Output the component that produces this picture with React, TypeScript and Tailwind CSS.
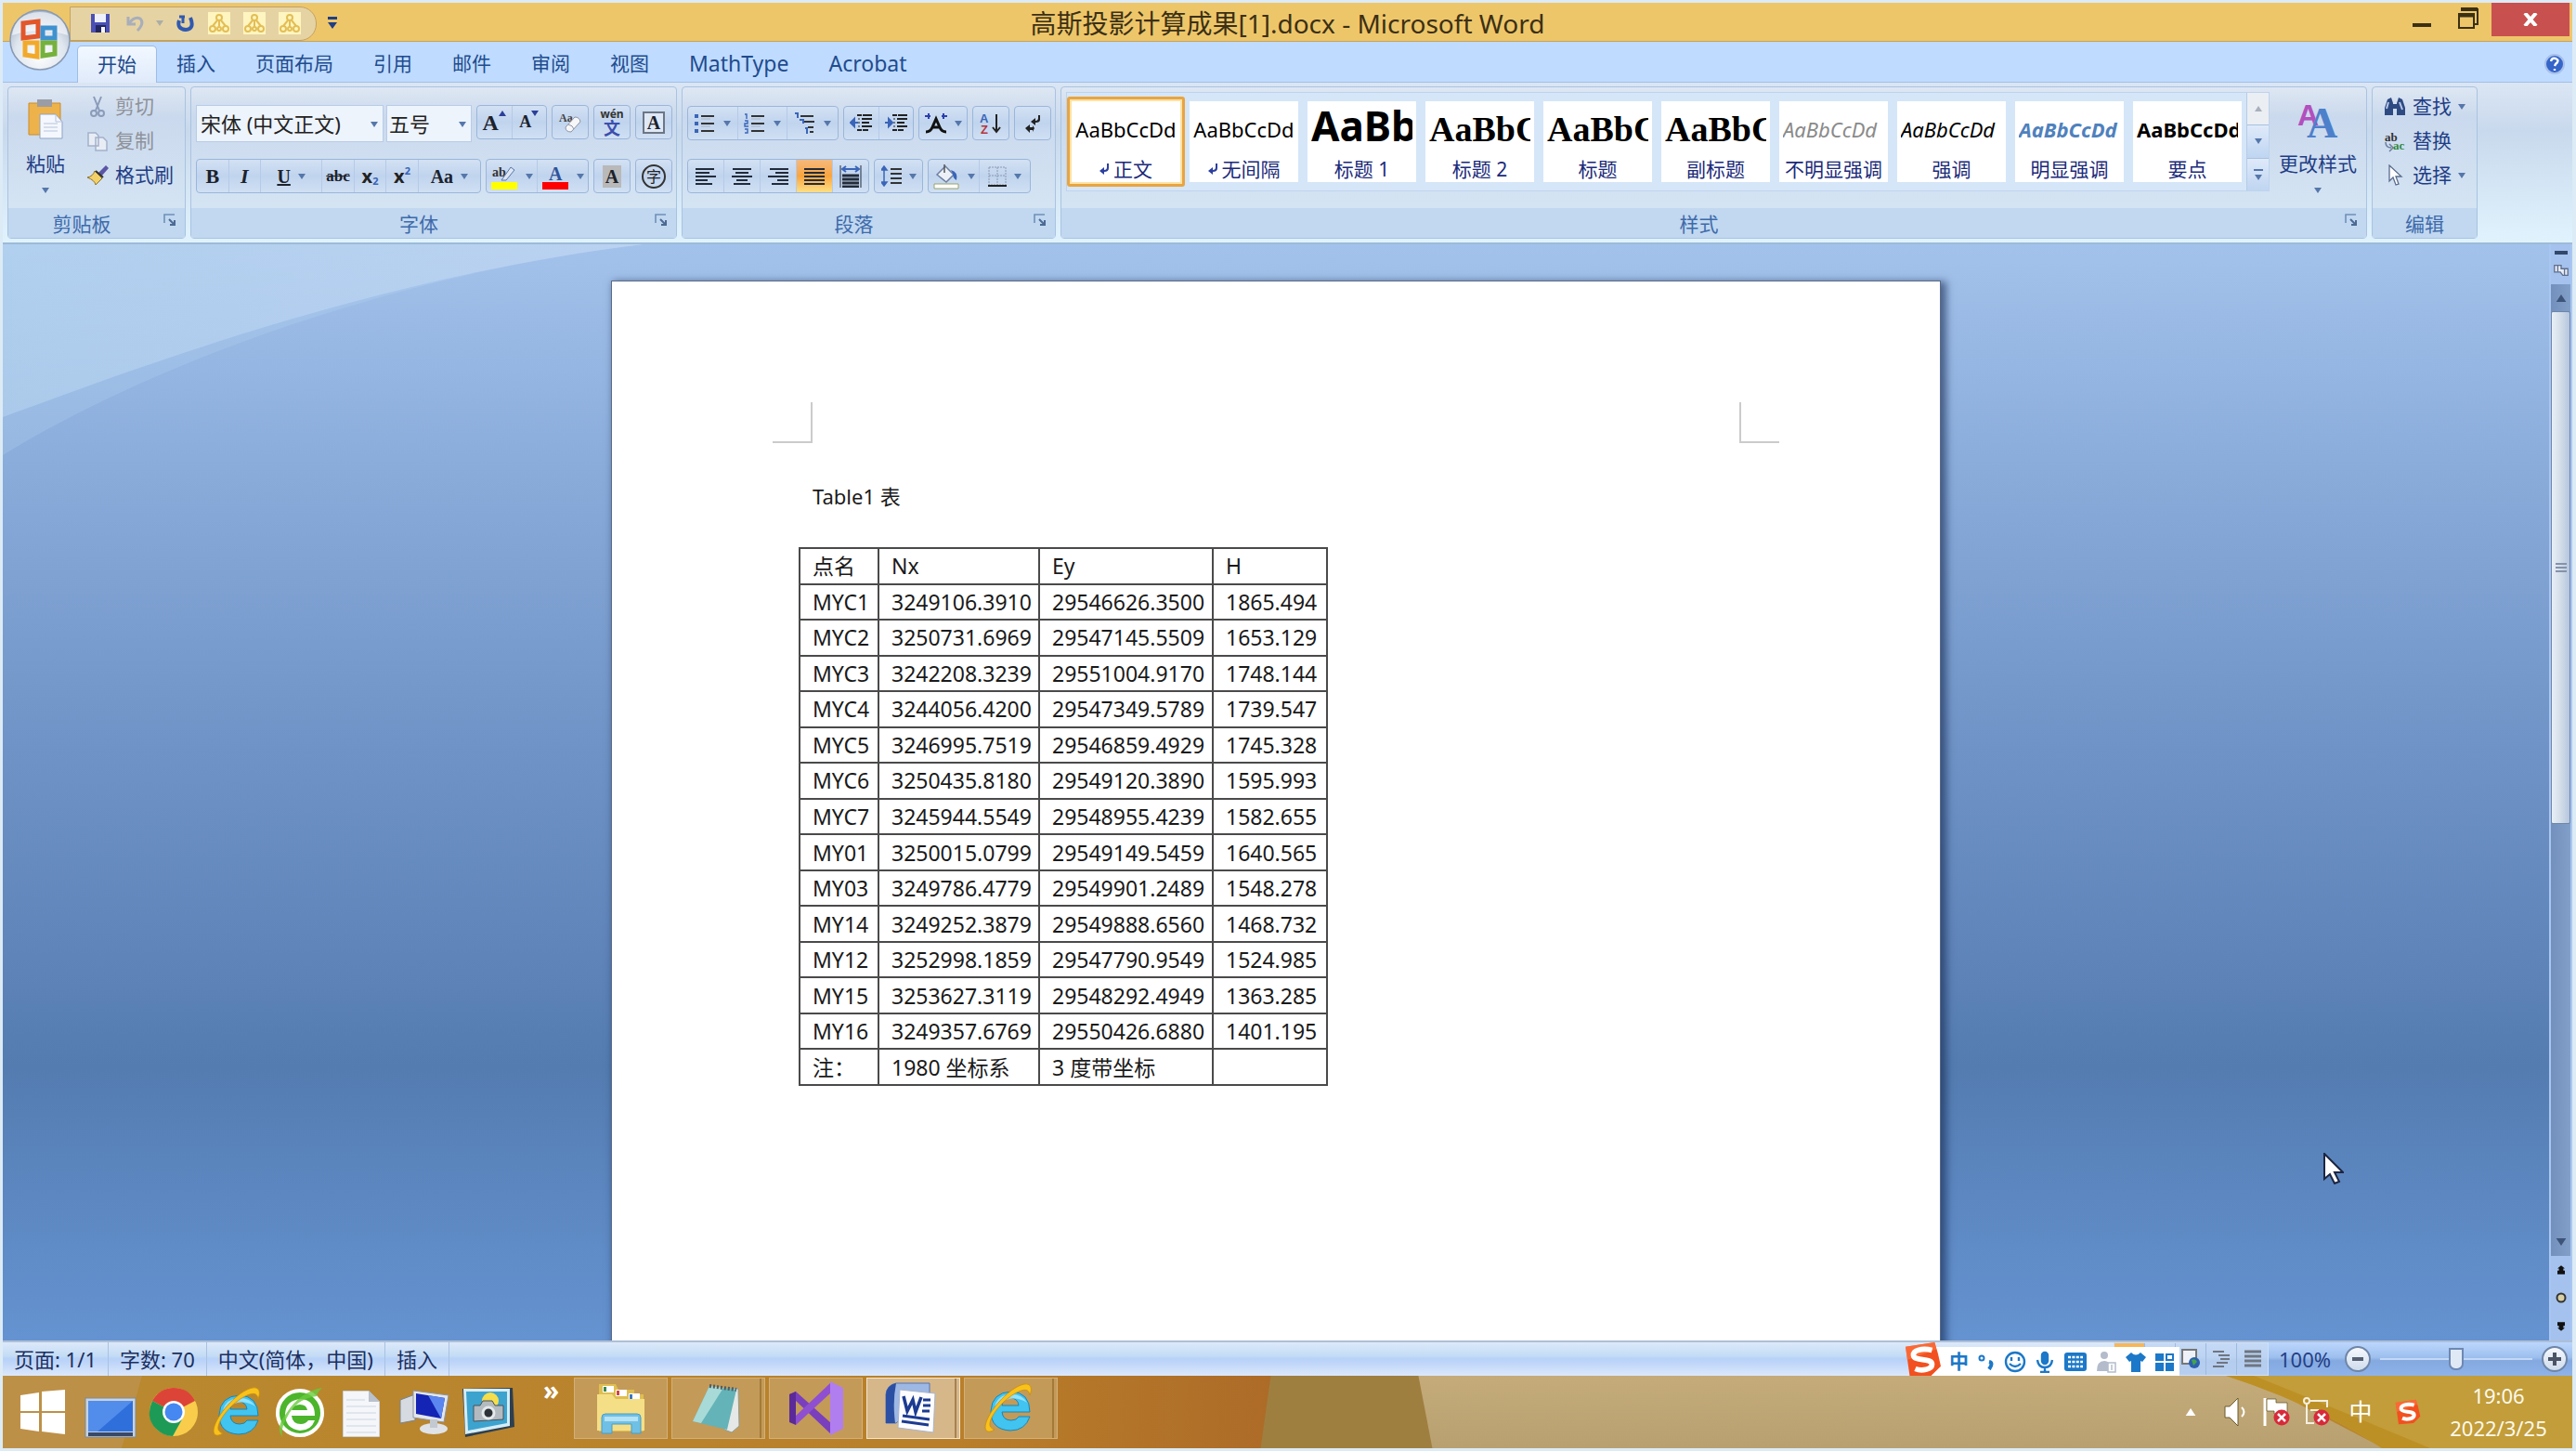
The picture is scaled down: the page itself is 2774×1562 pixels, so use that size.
import type { ReactNode } from "react";
import clsx from "clsx";
import { twMerge } from "tailwind-merge";

interface StyleItem {
  name: string;
  sample: string;
  className: string;
  mark?: boolean;
}

const tabs = ["开始", "插入", "页面布局", "引用", "邮件", "审阅", "视图", "MathType", "Acrobat"];

const styles: StyleItem[] = [
  { name: "正文", sample: "AaBbCcDd", className: "text-[22px] justify-center", mark: true },
  { name: "无间隔", sample: "AaBbCcDd", className: "text-[22px] justify-center", mark: true },
  { name: "标题 1", sample: "AaBb", className: "text-[44px] font-bold pb-2" },
  { name: "标题 2", sample: "AaBbC", className: "font-['Liberation_Serif',serif] text-[38px] font-bold" },
  { name: "标题", sample: "AaBbC", className: "font-['Liberation_Serif',serif] text-[38px] font-bold" },
  { name: "副标题", sample: "AaBbC", className: "font-['Liberation_Serif',serif] text-[38px] font-bold" },
  { name: "不明显强调", sample: "AaBbCcDd", className: "text-[22px] italic text-[#8a8a8a]" },
  { name: "强调", sample: "AaBbCcDd", className: "text-[22px] italic" },
  { name: "明显强调", sample: "AaBbCcDd", className: "text-[22px] italic font-bold text-[#4f81bd]" },
  { name: "要点", sample: "AaBbCcDd", className: "text-[22px] font-bold" },
];

const rows = [
  ["点名", "Nx", "Ey", "H"],
  ["MYC1", "3249106.3910", "29546626.3500", "1865.494"],
  ["MYC2", "3250731.6969", "29547145.5509", "1653.129"],
  ["MYC3", "3242208.3239", "29551004.9170", "1748.144"],
  ["MYC4", "3244056.4200", "29547349.5789", "1739.547"],
  ["MYC5", "3246995.7519", "29546859.4929", "1745.328"],
  ["MYC6", "3250435.8180", "29549120.3890", "1595.993"],
  ["MYC7", "3245944.5549", "29548955.4239", "1582.655"],
  ["MY01", "3250015.0799", "29549149.5459", "1640.565"],
  ["MY03", "3249786.4779", "29549901.2489", "1548.278"],
  ["MY14", "3249252.3879", "29549888.6560", "1468.732"],
  ["MY12", "3252998.1859", "29547790.9549", "1524.985"],
  ["MY15", "3253627.3119", "29548292.4949", "1363.285"],
  ["MY16", "3249357.6769", "29550426.6880", "1401.195"],
  ["注：", "1980 坐标系", "3 度带坐标", ""],
];

function Arrow({ className = "" }: { className?: string }) {
  return (
    <svg viewBox="0 0 8 6" className={twMerge("w-2 h-[6px] shrink-0 fill-[#5577ab]", className)}>
      <path d="M0 0h8L4 6z" />
    </svg>
  );
}

function Cluster({ children, className = "" }: { children: ReactNode; className?: string }) {
  return (
    <div
      className={clsx(
        "flex h-[37px] rounded-[4px] border border-[#9ab6dc] divide-x divide-[#b5cae8] overflow-hidden bg-linear-to-b from-[#d3e1f3] via-[#c0d4ee] to-[#d0e0f3]",
        className
      )}
    >
      {children}
    </div>
  );
}

function Tool({ label, arrow, active, children }: { label: string; arrow?: boolean; active?: boolean; children: ReactNode }) {
  return (
    <button
      aria-label={label}
      className={clsx(
        "flex items-center justify-center",
        arrow ? "grow-[3] basis-4 gap-2" : "grow-[2] basis-0",
        active && "bg-linear-to-b from-[#f5b97c] via-[#f9a53c] to-[#fddf84]"
      )}
    >
      {children}
      {arrow && <Arrow />}
    </button>
  );
}

function Group({ title, launcher, className = "", children }: { title: string; launcher?: boolean; className?: string; children: ReactNode }) {
  return (
    <section
      className={clsx(
        "flex flex-col shrink-0 rounded-[4px] border border-[#a9c3e0] bg-linear-to-b from-[#dee7f3] via-[#cad9ed] via-20% to-[#d8e8f5]",
        className
      )}
    >
      <div className="flex-1 flex">{children}</div>
      <div className={clsx("relative h-[32px] bg-[#c1d8f0] text-center text-[21px] leading-[34px] text-[#3e6aaa]", launcher && "pr-8")}>
        {title}
        {launcher && (
          <button aria-label={title + "选项"} className="absolute right-2 top-[5px]">
            <svg viewBox="0 0 16 16" className="w-4 h-4" fill="none" stroke="#6f8fb8" strokeWidth="1.6">
              <path d="M2 11V2h11" />
              <path d="M7 7l6 6M13 8v5H8" stroke="#4c6a94" strokeWidth="2" />
            </svg>
          </button>
        )}
      </div>
    </section>
  );
}

function SmallCommand({ label, icon, arrow, disabled }: { label: string; icon: ReactNode; arrow?: boolean; disabled?: boolean }) {
  return (
    <button
      disabled={disabled}
      className={clsx("flex items-center gap-[7px] h-[37px] text-[21px]", disabled ? "text-[#8f9299]" : "text-[#1f3d85]")}
    >
      {icon}
      {label}
      {arrow && <Arrow />}
    </button>
  );
}

function LinesIcon({ widths, align }: { widths: number[]; align: "left" | "center" | "right" }) {
  return (
    <svg viewBox="0 0 22 20" className="w-[22px] h-5" stroke="#222b3a" strokeWidth="2">
      {widths.map((w, i) => {
        const x = align === "left" ? 0 : align === "right" ? 22 - w : (22 - w) / 2;
        return <path key={i} d={`M${x} ${i * 4 + 2}h${w}`} />;
      })}
    </svg>
  );
}

function ListIcon({ kind }: { kind: "dot" | "num" | "multi" }) {
  if (kind === "multi") {
    return (
      <svg viewBox="0 0 24 24" className="w-6 h-6" strokeWidth="2" stroke="#333">
        <path d="M7 4h14M11 10h11M15 16h6M17 21h4" />
        <path d="M1 1h3v5M6 8h4v4M12 17h2v6" stroke="#3a65b8" fill="none" />
      </svg>
    );
  }
  return (
    <svg viewBox="0 0 24 24" className="w-6 h-6" strokeWidth="2" stroke="#333">
      <path d="M8 4h14M8 12h14M8 20h14" />
      <path d="M8 7h10M8 15h10" stroke="#aab4c4" strokeWidth="1" />
      {kind === "dot" ? (
        <path d="M1 4h4M1 12h4M1 20h4" stroke="#3a65b8" strokeWidth="4" />
      ) : (
        <path d="M1 2h2v5M1 9h3v3h-3v3h4M1 18h3v4h-3" stroke="#3a65b8" strokeWidth="1.4" fill="none" />
      )}
    </svg>
  );
}

function IndentIcon({ flip }: { flip?: boolean }) {
  return (
    <svg viewBox="0 0 24 22" className="w-6 h-[22px]" stroke="#222" strokeWidth="2">
      <path d="M8 2h5M14 2h10M13 6h11M13 10h8M13 14h11M8 18h5M14 18h6" />
      <path d="M10 1v20" strokeDasharray="2 2" strokeWidth="1" />
      <path d={flip ? "M0 10h6M4 6l4 4-4 4z" : "M9 10H3M5 6l-4 4 4 4z"} stroke="#3a65b8" fill="#3a65b8" />
    </svg>
  );
}

function SogouLogo({ className = "" }: { className?: string }) {
  return (
    <svg viewBox="0 0 42 40" className={className}>
      <path d="M1 5L34 0q4 12 7 27L30 38 6 40z" fill="#f2501f" />
      <path d="M1 5L34 0l2 8L3 20z" fill="#ff7a45" opacity=".6" />
      <path d="M31 9C20 6 9 9 10 15c1 7 21 2 21 10 0 6-12 8-19 5" fill="none" stroke="#fff" strokeWidth="6" />
    </svg>
  );
}

function IELogo() {
  return (
    <svg viewBox="0 0 56 56" className="w-14 h-14">
      <path d="M51 32H21q1 9 10 9 6 0 8-4h12q-5 15-21 15Q9 51 9 31 10 11 31 10q20 1 20 22zM21 25h18q-1-8-9-8t-9 8z" fill="#41c4ef" stroke="#1686bd" strokeWidth="1" />
      <path d="M13 26Q17 13 31 13q12 0 17 9-9-6-19-4-9 2-16 8z" fill="#b4f0ff" opacity=".7" />
      <path d="M13 51C5 56 1 52 4 43 9 28 30 5 45 2c7-1 9 4 6 12-1-7-6-7-14-3C23 18 9 35 8 44q-1 5 5 7z" fill="#f8c21b" stroke="#c98d0c" strokeWidth=".8" />
    </svg>
  );
}

function TitleBar() {
  return (
    <header className="grid grid-cols-[1fr_auto_1fr] h-[42px] bg-[#eec66a] border-b border-[#c5a25c]">
      <div className="flex items-center pl-[72px]">
        <div className="flex items-center gap-[14px] h-[37px] pl-[22px] pr-4 rounded-r-[18px] border border-[#c3a263] bg-[#e6d3a3]">
          <button aria-label="保存">
            <svg viewBox="0 0 20 20" className="w-5 h-5">
              <path d="M0 0h20v20H0z" fill="#4a4fb5" />
              <path d="M4 0h12v9H4z" fill="#eef1fb" />
              <path d="M5 12h11v8H5z" fill="#23265f" />
              <path d="M11 14h4v6h-4z" fill="#f5f5ff" />
            </svg>
          </button>
          <button aria-label="撤消" className="flex items-center gap-3 pl-1">
            <svg viewBox="0 0 20 20" className="w-5 h-5" fill="none" stroke="#a8aeba" strokeWidth="3">
              <path d="M2 3v8h8" />
              <path d="M3 10Q9 2 15 5q5 5-3 13" />
            </svg>
            <Arrow className="opacity-40" />
          </button>
          <button aria-label="恢复">
            <svg viewBox="0 0 20 20" className="w-5 h-5" fill="none" stroke="#3059b0" strokeWidth="4">
              <path d="M15 4q5 12-5 13-10-1-7-10" />
              <path d="M7 3v7M9 3H3" strokeWidth="3" />
            </svg>
          </button>
          {[0, 1, 2].map((i) => (
            <button key={i} aria-label={"公式" + (i + 1)}>
              <svg viewBox="0 0 24 24" className="w-6 h-6" fill="none" stroke="#e3be55" strokeWidth="2">
                <path d="M0 0h24v24H0z" fill="#fff5c0" stroke="none" />
                <circle cx="12" cy="6" r="3" />
                <circle cx="5" cy="18" r="3" />
                <circle cx="12" cy="18" r="2" />
                <circle cx="19" cy="18" r="3" />
                <path d="M12 9v6M10 9l-5 6M14 9l5 6" />
              </svg>
            </button>
          ))}
        </div>
        <button aria-label="自定义快速访问工具栏" className="ml-3">
          <svg viewBox="0 0 10 14" className="w-[10px] h-[14px]" fill="#1e3f86">
            <path d="M0 0h10v3H0zM0 6h10l-5 7z" />
          </svg>
        </button>
      </div>
      <h1 className="text-[28px] leading-[44px] text-[#3b3014]">高斯投影计算成果[1].docx - Microsoft Word</h1>
      <div className="flex justify-end items-start">
        <button aria-label="最小化" className="w-[50px] h-[36px] flex justify-center items-start pt-[22px]">
          <span className="w-5 h-1 bg-[#3b3014]" />
        </button>
        <button aria-label="还原" className="w-[50px] h-[36px] flex justify-center items-start pt-[5px]">
          <svg viewBox="0 0 22 23" className="w-[22px] h-[23px]" fill="none" stroke="#3b3014" strokeWidth="2">
            <path d="M1 7h16v15H1z" />
            <path d="M1 9h16" strokeWidth="3" />
            <path d="M4 2h17v16h-3" />
            <path d="M3 2h18" strokeWidth="4" />
          </svg>
        </button>
        <button aria-label="关闭" className="mr-[3px] w-[84px] h-[36px] bg-[#c8504f] flex items-center justify-center">
          <svg viewBox="0 0 16 14" className="w-4 h-[14px]" stroke="#fff" strokeWidth="4">
            <path d="M2 0l12 14M14 0L2 14" />
          </svg>
        </button>
      </div>
    </header>
  );
}

function OfficeButton() {
  return (
    <button aria-label="Office 按钮" className="absolute left-[10px] top-[10px] z-10">
      <svg viewBox="0 0 66 66" className="w-[66px] h-[66px]">
        <defs>
          <radialGradient id="orb" cx=".5" cy=".75" r=".7">
            <stop offset="0" stopColor="#fff" />
            <stop offset=".6" stopColor="#dfe6ee" />
            <stop offset="1" stopColor="#a9b8cc" />
          </radialGradient>
        </defs>
        <circle cx="33" cy="33" r="32" fill="url(#orb)" stroke="#8799b4" strokeWidth="1.5" />
        <path d="M3 28q30-10 60 0Q60 4 33 3 6 4 3 28z" fill="#fff" opacity=".6" />
        <g fill="none" strokeWidth="5">
          <path d="M15 15l16-2v16l-16 2z" stroke="#e2562a" />
          <path d="M36 20h13v11H36z" stroke="#3f92cf" />
          <path d="M17 36h13v15l-13-2z" stroke="#f2a92b" />
          <path d="M36 36h13v12l-13 2z" stroke="#75b13c" />
        </g>
      </svg>
    </button>
  );
}

function TabRow() {
  return (
    <nav className="flex items-end h-[44px] bg-[#bfdbff] pl-[80px] pr-[8px] border-b border-[#a3bfe6]">
      {tabs.map((tab, i) => (
        <button
          key={tab}
          className={clsx(
            "h-10 px-[21px] border border-b-0 rounded-t-[5px] text-[#214b8e]",
            i > 6 ? "text-[23px]" : "text-[21px]",
            i === 0 ? "bg-linear-to-b from-[#f2f8ff] to-[#dfeafa] border-[#9dbde8] -mb-px" : "border-transparent -ml-px"
          )}
        >
          {tab}
        </button>
      ))}
      <button aria-label="帮助" className="ml-auto mb-2">
        <svg viewBox="0 0 22 22" className="w-[22px] h-[22px]">
          <circle cx="11" cy="11" r="10" fill="#3565c8" stroke="#a8c0ea" strokeWidth="2" />
          <path d="M7 8q1-4 5-3 5 2 0 6l-1 2M11 16v2" stroke="#fff" strokeWidth="2.4" fill="none" />
        </svg>
      </button>
    </nav>
  );
}

function ClipboardGroup() {
  return (
    <Group title="剪贴板" launcher className="w-[192px]">
      <button className="w-[80px] flex flex-col items-center pt-3 text-[21px] text-[#1f3d85]">
        <svg viewBox="0 0 40 44" className="w-10 h-11">
          <path d="M2 5h34v34H2z" fill="#eeb24a" stroke="#c98d2c" />
          <path d="M11 1h16v8H11z" fill="#9a9da5" />
          <path d="M14 17h17l7 8v18H14z" fill="#f4f7fd" stroke="#8fa3c5" />
          <path d="M31 17v8h7M18 27h15M18 31h15M18 35h15" fill="none" stroke="#b7c4dc" />
        </svg>
        <span className="mt-3 leading-[28px]">粘贴</span>
        <Arrow className="mt-3" />
      </button>
      <div className="flex flex-col pt-[2px] pl-1">
        <SmallCommand
          label="剪切"
          disabled
          icon={
            <svg viewBox="0 0 24 24" className="w-6 h-6" fill="none" stroke="#8b9cba" strokeWidth="2">
              <path d="M8 1l6 15M16 1l-6 15" />
              <circle cx="8" cy="19" r="3" />
              <circle cx="16" cy="19" r="3" />
            </svg>
          }
        />
        <SmallCommand
          label="复制"
          disabled
          icon={
            <svg viewBox="0 0 24 24" className="w-6 h-6" fill="#e8edf5" stroke="#a2b1ca" strokeWidth="1.5">
              <path d="M2 3h8l3 3v11H2zM10 8h8l4 4v10H10z" />
            </svg>
          }
        />
        <SmallCommand
          label="格式刷"
          icon={
            <svg viewBox="0 0 24 24" className="w-6 h-6">
              <path d="M13 9l8-8 3 3-8 9z" fill="#5b55a5" />
              <path d="M9 7l8 8-7 7q-1-5-9-8 6-1 8-7z" fill="#f3d169" stroke="#8e7228" />
              <path d="M10 7l8 7" stroke="#333" strokeWidth="2" />
            </svg>
          }
        />
      </div>
    </Group>
  );
}

const glyph = "font-['Liberation_Serif',serif] font-bold text-[#1c222c]";

function FontGroup() {
  return (
    <Group title="字体" launcher className="w-[524px]">
      <div className="flex flex-col pt-[19px] pl-[5px] gap-[18px]">
        <div className="flex gap-[5px]">
          <div className="flex gap-[3px]">
            <label className="relative">
              <select aria-label="字体" className="appearance-none w-[202px] h-[40px] pl-1 bg-[#eef4fc] border border-[#b8cce8] text-[22px] leading-[36px] text-[#222]">
                <option>宋体 (中文正文)</option>
              </select>
              <Arrow className="absolute right-[6px] top-[18px] pointer-events-none" />
            </label>
            <label className="relative">
              <select aria-label="字号" className="appearance-none w-[92px] h-[40px] pl-[2px] bg-[#eef4fc] border border-[#b8cce8] text-[22px] leading-[36px] text-[#222]">
                <option>五号</option>
              </select>
              <Arrow className="absolute right-[6px] top-[18px] pointer-events-none" />
            </label>
          </div>
          <Cluster className="w-[76px]">
            <Tool label="增大字体">
              <span className={clsx(glyph, "text-[24px]")}>A</span>
              <svg viewBox="0 0 8 6" className="w-2 h-[6px] mb-5" fill="#2c3f99"><path d="M0 6h8L4 0z" /></svg>
            </Tool>
            <Tool label="缩小字体">
              <span className={clsx(glyph, "text-[18px]")}>A</span>
              <svg viewBox="0 0 8 6" className="w-2 h-[6px] mb-5" fill="#2c3f99"><path d="M0 0h8L4 6z" /></svg>
            </Tool>
          </Cluster>
          <Cluster className="w-10">
            <Tool label="清除格式">
              <svg viewBox="0 0 26 26" className="w-[26px] h-[26px]">
                <text x="1" y="12" fontSize="12" fontFamily="Liberation Serif" fontWeight="bold" fill="#444">Aa</text>
                <path d="M8 18L18 7q5 0 6 5L14 23q-6 0-6-5z" fill="#f7f7fa" stroke="#8d93a3" />
                <path d="M11 15q5 1 6 5" fill="none" stroke="#8d93a3" />
              </svg>
            </Tool>
          </Cluster>
          <Cluster className="w-10">
            <Tool label="拼音指南">
              <span className="flex flex-col items-center">
                <span className="text-[12px] leading-[12px] font-bold text-[#333]">wén</span>
                <span className="text-[18px] leading-[18px] font-bold text-[#3c4fae]">文</span>
              </span>
            </Tool>
          </Cluster>
          <Cluster className="w-10">
            <Tool label="字符边框">
              <span className={clsx(glyph, "border-2 border-[#6c7686] w-6 h-6 leading-5 text-[20px] bg-[#dfe8f5]")}>A</span>
            </Tool>
          </Cluster>
        </div>
        <div className="flex gap-[5px]">
          <Cluster className="w-[307px]">
            <Tool label="加粗"><span className={clsx(glyph, "text-[22px]")}>B</span></Tool>
            <Tool label="倾斜"><span className={clsx(glyph, "text-[22px] italic")}>I</span></Tool>
            <Tool label="下划线" arrow><span className={clsx(glyph, "text-[20px] underline")}>U</span></Tool>
            <Tool label="删除线"><span className={clsx(glyph, "text-[17px] line-through")}>abc</span></Tool>
            <Tool label="下标">
              <span className="font-bold text-[20px] text-[#222]">x</span>
              <span className="self-end mb-1 text-[11px] font-bold text-[#3a65b8]">2</span>
            </Tool>
            <Tool label="上标">
              <span className="font-bold text-[20px] text-[#222]">x</span>
              <span className="self-start mt-1 text-[11px] font-bold text-[#3a65b8]">2</span>
            </Tool>
            <Tool label="更改大小写" arrow><span className={clsx(glyph, "text-[20px]")}>Aa</span></Tool>
          </Cluster>
          <Cluster className="w-[111px]">
            <Tool label="突出显示" arrow>
              <svg viewBox="0 0 30 28" className="w-[30px] h-7">
                <text x="2" y="14" fontSize="14" fontFamily="Liberation Serif" fontWeight="bold" fill="#333">ab</text>
                <path d="M12 18l10-14 4 3-9 11z" fill="#dfe6f2" stroke="#5577ab" />
                <path d="M1 20h28v8H1z" fill="#ffff00" />
              </svg>
            </Tool>
            <Tool label="字体颜色" arrow>
              <svg viewBox="0 0 30 28" className="w-[30px] h-7">
                <text x="8" y="18" fontSize="20" fontFamily="Liberation Serif" fontWeight="bold" fill="#2f5399">A</text>
                <path d="M1 20h28v8H1z" fill="#ff0000" />
              </svg>
            </Tool>
          </Cluster>
          <Cluster className="w-10">
            <Tool label="字符底纹"><span className={clsx(glyph, "w-5 h-6 leading-6 text-[20px] bg-[#b9b9b9]")}>A</span></Tool>
          </Cluster>
          <Cluster className="w-10">
            <Tool label="带圈字符">
              <span className="w-[26px] h-[26px] rounded-full border-2 border-[#333] text-[16px] leading-[22px] text-[#222]">字</span>
            </Tool>
          </Cluster>
        </div>
      </div>
    </Group>
  );
}

function ParagraphGroup() {
  return (
    <Group title="段落" launcher className="w-[403px]">
      <div className="flex flex-col pt-[20px] pl-[5px] gap-[20px]">
        <div className="flex gap-[5px]">
          <Cluster className="w-[163px]">
            <Tool label="项目符号" arrow><ListIcon kind="dot" /></Tool>
            <Tool label="编号" arrow><ListIcon kind="num" /></Tool>
            <Tool label="多级列表" arrow><ListIcon kind="multi" /></Tool>
          </Cluster>
          <Cluster className="w-[76px]">
            <Tool label="减少缩进量"><IndentIcon /></Tool>
            <Tool label="增加缩进量"><IndentIcon flip /></Tool>
          </Cluster>
          <Cluster className="w-[53px]">
            <Tool label="中文版式" arrow>
              <svg viewBox="0 0 24 22" className="w-6 h-[22px]" fill="none">
                <path d="M1 20q5 0 7-5l4-9 4 9q2 5 7 5M7 15h10" stroke="#111" strokeWidth="3" />
                <path d="M0 3h6M4 0v6M24 3h-6M20 0v6" stroke="#2c3fb0" strokeWidth="2" />
              </svg>
            </Tool>
          </Cluster>
          <Cluster className="w-10">
            <Tool label="排序">
              <svg viewBox="0 0 24 26" className="w-6 h-[26px]">
                <text x="0" y="12" fontSize="13" fontFamily="Liberation Sans" fontWeight="bold" fill="#3a65b8">A</text>
                <text x="1" y="24" fontSize="13" fontFamily="Liberation Sans" fontWeight="bold" fill="#b5343c">Z</text>
                <path d="M18 3v18M14 17l4 5 4-5" fill="none" stroke="#222" strokeWidth="2" />
              </svg>
            </Tool>
          </Cluster>
          <Cluster className="w-10">
            <Tool label="显示编辑标记">
              <svg viewBox="0 0 20 22" className="w-5 h-[22px]" fill="#222">
                <path d="M18 2v5q0 3-5 3v3l-5-4 5-4v3q3 0 3-3V2zM10 13v2H7v-3l-5 4 5 5v-3h3v2l2-4z" />
              </svg>
            </Tool>
          </Cluster>
        </div>
        <div className="flex gap-[5px]">
          <Cluster className="w-[196px]">
            <Tool label="左对齐"><LinesIcon align="left" widths={[20, 15, 22, 13, 18]} /></Tool>
            <Tool label="居中"><LinesIcon align="center" widths={[20, 14, 22, 12, 18]} /></Tool>
            <Tool label="右对齐"><LinesIcon align="right" widths={[20, 14, 22, 12, 18]} /></Tool>
            <Tool label="两端对齐" active><LinesIcon align="left" widths={[22, 22, 22, 22, 22]} /></Tool>
            <Tool label="分散对齐">
              <svg viewBox="0 0 24 24" className="w-6 h-6" stroke="#222b3a" strokeWidth="2">
                <path d="M1 0v24M23 0v24" strokeWidth="1" />
                <path d="M3 11h18M3 15h18M3 19h18M3 23h18" strokeWidth="3" />
                <path d="M3 4h18M7 1L3 4l4 3M17 1l4 3-4 3" fill="none" stroke="#3a65b8" />
              </svg>
            </Tool>
          </Cluster>
          <Cluster className="w-[53px]">
            <Tool label="行距" arrow>
              <svg viewBox="0 0 22 24" className="w-[22px] h-6" strokeWidth="2" stroke="#333">
                <path d="M10 4h12M10 9h12M10 14h12M10 19h12" />
                <path d="M3 2v20M0 5l3-4 3 4zM0 18l3 4 3-4z" stroke="#3a65b8" fill="#3a65b8" strokeWidth="1.5" />
              </svg>
            </Tool>
          </Cluster>
          <Cluster className="w-[111px]">
            <Tool label="底纹" arrow>
              <svg viewBox="0 0 30 28" className="w-[30px] h-7">
                <path d="M5 12l9-9 9 9-8 8z" fill="#edf1f7" stroke="#6c7f9f" strokeWidth="1.5" />
                <path d="M13 1v9" stroke="#555" strokeWidth="1.5" />
                <path d="M20 7q8 2 6 11-4-2-4-7z" fill="#3a65b8" />
                <path d="M2 22h26v5H2z" fill="#fff" stroke="#9aa36a" />
              </svg>
            </Tool>
            <Tool label="边框" arrow>
              <svg viewBox="0 0 20 22" className="w-5 h-[22px]" fill="none" stroke="#8a98b0" strokeDasharray="2 1">
                <path d="M1 1h18v19H1zM10 1v19M1 10h18" />
                <path d="M0 21h20" stroke="#222" strokeWidth="2" strokeDasharray="none" />
              </svg>
            </Tool>
          </Cluster>
        </div>
      </div>
    </Group>
  );
}

function StylesGroup() {
  return (
    <Group title="样式" launcher className="w-[1407px]">
      <div className="flex mt-[5px] ml-[5px] h-[107px] border border-[#bed3ec] bg-[#d5e6f8]">
        <div className="flex items-center">
          {styles.map((s, i) => (
            <button
              key={s.name}
              className={clsx("w-[127px] p-[2px] border-[3px] rounded-[3px]", i === 0 ? "border-[#e9a440] bg-[#fbe3a6]" : "border-transparent")}
            >
              <span className="flex flex-col h-[87px] bg-white text-black">
                <span className={clsx("mx-1 h-[60px] flex items-center overflow-hidden leading-[50px]", s.className)}>{s.sample}</span>
                <span className="flex items-center justify-center gap-[5px] text-[21px] leading-[26px] whitespace-nowrap text-[#1b2a7a]">
                  {s.mark && (
                    <svg viewBox="0 0 10 12" className="w-[10px] h-3" fill="#2c3fa0">
                      <path d="M10 0v5q0 4-5 4v3L0 8l5-4v3q3 0 3-3V0z" />
                    </svg>
                  )}
                  {s.name}
                </span>
              </span>
            </button>
          ))}
        </div>
        <div className="w-[24px] flex flex-col divide-y divide-[#a9c1e0] border-l border-[#b6cbe6]">
          <button aria-label="上一行" className="flex-1 flex items-center justify-center bg-[#ebeef3]">
            <Arrow className="rotate-180 fill-[#a9b0bc]" />
          </button>
          <button aria-label="下一行" className="flex-1 flex items-center justify-center bg-linear-to-b from-[#dfeafa] to-[#bfd5f1]">
            <Arrow />
          </button>
          <button aria-label="其他" className="flex-1 flex flex-col gap-1 items-center justify-center bg-linear-to-b from-[#dfeafa] to-[#bfd5f1]">
            <span className="w-[10px] h-[2px] bg-[#5577ab]" />
            <Arrow />
          </button>
        </div>
      </div>
      <button className="w-[106px] flex flex-col items-center pt-3 text-[21px] text-[#1f3d85]">
        <svg viewBox="0 0 44 44" className="w-11 h-11">
          <text x="0" y="29" fontSize="32" fontFamily="Liberation Sans" fontWeight="bold" fill="#b24fbe">A</text>
          <text x="10" y="42" fontSize="46" fontFamily="Liberation Serif" fontWeight="bold" fill="#4d80cb">A</text>
        </svg>
        <span className="mt-3 leading-[28px]">更改样式</span>
        <Arrow className="mt-3" />
      </button>
    </Group>
  );
}

function EditGroup() {
  return (
    <Group title="编辑" className="w-[114px]">
      <div className="flex flex-col pt-[2px] pl-3">
        <SmallCommand
          label="查找"
          arrow
          icon={
            <svg viewBox="0 0 24 22" className="w-6 h-[22px]" fill="#2e4a82">
              <path d="M4 3l4-2 2 6v13H1V12zM20 3l-4-2-2 6v13h9V12zM10 8h4v5h-4z" />
              <path d="M3 13l2-7M17 6l3 8" stroke="#b7c8e6" strokeWidth="2" />
            </svg>
          }
        />
        <SmallCommand
          label="替换"
          icon={
            <svg viewBox="0 0 24 24" className="w-6 h-6">
              <text x="1" y="12" fontSize="13" fontFamily="Liberation Serif" fontWeight="bold" fill="#333">ab</text>
              <path d="M2 13q0 6 6 6M6 15l4 4-4 4" fill="none" stroke="#6a7f9f" strokeWidth="1.5" />
              <text x="10" y="21" fontSize="13" fontFamily="Liberation Serif" fontWeight="bold" fill="#2f8a3c">ac</text>
            </svg>
          }
        />
        <SmallCommand
          label="选择"
          arrow
          icon={
            <svg viewBox="0 0 24 24" className="w-6 h-6">
              <path d="M6 1v17l4-4 3 8 3-1-3-8h6z" fill="#fff" stroke="#5a6c8c" strokeWidth="1.3" />
            </svg>
          }
        />
      </div>
    </Group>
  );
}

function ScrollBar() {
  return (
    <aside className="w-[25px] flex flex-col items-center bg-[#a5c2ee] border-x-2 border-[#a9c6f2]">
      <span className="mt-[7px] w-[14px] h-1 bg-[#33476b]" />
      <svg viewBox="0 0 20 18" className="mt-2 w-[18px] h-[18px]" fill="#e9eef6" stroke="#5f6f8e" strokeWidth="1.5">
        <path d="M2 3h8v4h8v8h-6l-3-4H2z" />
        <path d="M6 3v8M14 7v8" />
      </svg>
      <div className="mt-[6px] flex-1 w-full flex flex-col bg-linear-to-r from-[#7390bd] to-[#829fc9]">
        <button aria-label="向上滚动" className="h-[29px] flex items-center justify-center">
          <Arrow className="w-[14px] h-2 rotate-180 fill-[#3d5478]" />
        </button>
        <div className="basis-1/2 grow-[1.2] max-h-[552px] flex flex-col gap-[2px] items-center justify-center rounded-[2px] border border-[#6f86a8] bg-linear-to-r from-[#e9eff6] via-[#d3dde9] to-[#b4c6dd]">
          <span className="w-3 h-[2px] bg-[#8493ab]" />
          <span className="w-3 h-[2px] bg-[#8493ab]" />
          <span className="w-3 h-[2px] bg-[#8493ab]" />
        </div>
        <div className="grow" />
        <button aria-label="向下滚动" className="h-[31px] flex items-center justify-center">
          <Arrow className="w-[14px] h-2 fill-[#3d5478]" />
        </button>
      </div>
      <div className="h-[91px] w-full flex flex-col items-center justify-around">
        <button aria-label="前一页">
          <svg viewBox="0 0 10 12" className="w-2 h-[10px]" fill="#111"><path d="M5 0l5 4H8v3h2v5H0V7h2V4H0z" /></svg>
        </button>
        <button aria-label="选择浏览对象">
          <svg viewBox="0 0 12 12" className="w-3 h-3"><circle cx="6" cy="6" r="4.5" fill="#d8cfa4" stroke="#333" strokeWidth="2" /></svg>
        </button>
        <button aria-label="下一页">
          <svg viewBox="0 0 10 12" className="w-2 h-[10px]" fill="#111"><path d="M5 12l5-4H8V5h2V0H0v5h2v3H0z" /></svg>
        </button>
      </div>
    </aside>
  );
}

function Document() {
  return (
    <div className="relative flex-1 overflow-hidden bg-[linear-gradient(#a3c2eb_0%,#84a7d7_25%,#6f93c6_46%,#6085ba_64%,#547cb1_75%,#6593d1_100%)]">
      <svg viewBox="0 0 700 230" className="absolute left-0 top-0 w-[700px] h-[230px]">
        <defs>
          <linearGradient id="swoosh" x1="0" y1="0" x2="1" y2="0">
            <stop offset="0" stopColor="#b9d6f0" />
            <stop offset="1" stopColor="#cadbf6" />
          </linearGradient>
        </defs>
        <path d="M0 227C140 140 400 35 690 0H0z" fill="#b5d3ef" opacity=".28" />
        <path d="M0 186C140 135 400 35 690 0H0z" fill="url(#swoosh)" opacity=".55" />
      </svg>
      <main className="relative mx-auto mt-[39px] w-[1432px] h-full bg-white border border-[#5b6b85] shadow-[4px_3px_8px_2px_rgba(20,40,80,0.6)]">
        <div className="flex justify-between px-[173px] pt-[130px]">
          <span className="w-[43px] h-[44px] border-r-2 border-b-2 border-[#cbcbcb]" />
          <span className="w-[43px] h-[44px] border-l-2 border-b-2 border-[#cbcbcb]" />
        </div>
        <div className="pl-[201px] pt-[39px]">
          <p className="pl-[15px] text-[22px] leading-[36px] text-[#1a1a1a]">Table1 表</p>
          <table className="mt-[37px] h-[580px] table-fixed w-[568px] border-collapse text-[23px] leading-[32px] text-[#1a1a1a]">
            <colgroup>
              <col className="w-[85px]" />
              <col className="w-[173px]" />
              <col className="w-[187px]" />
              <col className="w-[123px]" />
            </colgroup>
            <tbody>
              {rows.map((row) => (
                <tr key={row[0]}>
                  {row.map((cell, i) => (
                    <td key={i} className="border-2 border-[#4a4a4a] p-0 pl-[13px] whitespace-nowrap">
                      {cell}
                    </td>
                  ))}
                </tr>
              ))}
            </tbody>
          </table>
        </div>
      </main>
      <svg viewBox="0 0 22 34" className="absolute right-[221px] bottom-[168px] w-[22px] h-[34px]">
        <path d="M1 1v27l6-5 5 10 5-2-5-10h9z" fill="#fff" stroke="#1c2540" strokeWidth="2" />
      </svg>
    </div>
  );
}

function SogouBar() {
  return (
    <div className="absolute right-[423px] bottom-0 h-[31px] w-[272px] pl-6 pr-[6px] flex items-center justify-between bg-white">
      <SogouLogo className="absolute -left-[25px] -top-[5px] w-[42px] h-[38px]" />
      <span className="text-[21px] leading-[31px] font-bold text-[#1c78c8]">中</span>
      <svg viewBox="0 0 18 18" className="w-[18px] h-[18px]" fill="none" stroke="#1c78c8" strokeWidth="2">
        <circle cx="4" cy="5" r="2.5" />
        <path d="M12 9q5 1 0 8" strokeWidth="4" />
      </svg>
      <svg viewBox="0 0 24 24" className="w-6 h-6" fill="none" stroke="#1c78c8" strokeWidth="2.4">
        <circle cx="12" cy="12" r="10" />
        <path d="M8 7v4M16 7v4M6 14q6 6 12 0" />
      </svg>
      <svg viewBox="0 0 20 24" className="w-5 h-6" fill="none" stroke="#1c78c8" strokeWidth="2.4">
        <rect x="7" y="2" width="6" height="12" rx="3" fill="#1c78c8" />
        <path d="M2 10q1 8 8 8t8-8M10 18v5M5 23h10" />
      </svg>
      <svg viewBox="0 0 24 20" className="w-6 h-5">
        <rect width="24" height="20" rx="3" fill="#1c78c8" />
        <path d="M4 5h16M4 10h16M4 15h16" stroke="#fff" strokeWidth="2.4" strokeDasharray="3 1.4" />
      </svg>
      <svg viewBox="0 0 22 24" className="w-[22px] h-6" fill="#b4bccb">
        <circle cx="9" cy="5" r="4" />
        <path d="M1 22q0-11 8-11 4 0 5 3v8z" />
        <path d="M13 13h8v10h-8z" fill="#fff" stroke="#b4bccb" strokeWidth="1.5" />
        <path d="M17 15v6" stroke="#b4bccb" strokeWidth="1.5" />
      </svg>
      <svg viewBox="0 0 22 22" className="w-[22px] h-[22px]" fill="#1c78c8">
        <path d="M6 1q5 5 10 0l6 5-4 5-2-1v12H6V10l-2 1-4-5z" />
      </svg>
      <svg viewBox="0 0 20 20" className="w-5 h-5" fill="#1c78c8">
        <path d="M0 1h9v8H0zM0 11h9v9H0zM11 11h9v9h-9z" />
        <path d="M12 2h7v6h-7z" fill="none" stroke="#1c78c8" strokeWidth="2" />
      </svg>
    </div>
  );
}

function StatusBar() {
  const items = ["页面: 1/1", "字数: 70", "中文(简体，中国)", "插入"];
  return (
    <footer className="relative flex h-[38px] border-t-2 border-[#aebfd6] bg-[linear-gradient(#dde9fa_0%,#c4dcf5_40%,#b7d1f8_50%,#dbe8fb_100%)] text-[22px] text-[#1c2f5f]">
      {items.map((item) => (
        <span key={item} className="px-[12px] leading-[36px] border-r border-[#a9c1e2]">
          {item}
        </span>
      ))}
      <div className="ml-auto flex items-center bg-[linear-gradient(#bcd7fd_0%,#9dbfee_45%,#83a9e0_55%,#8db3ea_100%)]">
        <div className="flex h-full items-center border border-[#cfe0f8] bg-[#c9dcf4]/70 divide-x divide-[#9fb9de]">
          <button aria-label="页面视图" className="w-[33px] h-full bg-[#f6b65a]" />
          <button aria-label="阅读版式" className="w-[33px] h-full" />
          <button aria-label="Web 版式" className="w-[33px] h-full flex items-center justify-center">
            <svg viewBox="0 0 22 22" className="w-[22px] h-[22px]">
              <path d="M2 1h15v15H2z" fill="#eef2f8" stroke="#777" strokeWidth="2" />
              <circle cx="15" cy="15" r="6" fill="#2c5fae" />
              <path d="M12 12q4-2 6 2l-4 4z" fill="#45a34b" />
            </svg>
          </button>
          <button aria-label="大纲视图" className="w-[33px] h-full flex items-center justify-center">
            <svg viewBox="0 0 18 20" className="w-[18px] h-5" stroke="#6f7681" strokeWidth="2">
              <path d="M0 2h12M6 6h12M8 10h10M4 14h12M0 18h12" />
            </svg>
          </button>
          <button aria-label="普通视图" className="w-[33px] h-full flex items-center justify-center">
            <svg viewBox="0 0 18 20" className="w-[18px] h-5" stroke="#6f7681" strokeWidth="3">
              <path d="M0 2h18M0 7h18M0 12h18M0 17h18" />
            </svg>
          </button>
        </div>
        <button className="w-[82px] pr-1 text-[#253f85]">100%</button>
        <button aria-label="缩小" className="w-7 h-7 rounded-full border-2 border-[#6f86a8] bg-linear-to-b from-[#f6f9fd] to-[#cfdcec] flex items-center justify-center">
          <span className="w-3 h-1 bg-[#555f70]" />
        </button>
        <input
          type="range"
          aria-label="显示比例"
          defaultValue={50}
          className="appearance-none mx-[10px] w-[164px] h-[2px] bg-[#c3d8f5] [&::-webkit-slider-thumb]:appearance-none [&::-webkit-slider-thumb]:w-4 [&::-webkit-slider-thumb]:h-6 [&::-webkit-slider-thumb]:bg-[#dfe9f6] [&::-webkit-slider-thumb]:border-2 [&::-webkit-slider-thumb]:border-[#6d88b3] [&::-webkit-slider-thumb]:rounded-b-[7px]"
        />
        <button aria-label="放大" className="mr-[5px] w-7 h-7 rounded-full border-2 border-[#6f86a8] bg-linear-to-b from-[#f6f9fd] to-[#cfdcec] flex items-center justify-center">
          <svg viewBox="0 0 14 14" className="w-[14px] h-[14px]" stroke="#4a5465" strokeWidth="4">
            <path d="M7 0v14M0 7h14" />
          </svg>
        </button>
      </div>
      <SogouBar />
    </footer>
  );
}

function TaskButton({ label, active, stacked, children }: { label: string; active?: boolean; stacked?: boolean; children: ReactNode }) {
  return (
    <button
      aria-label={label}
      className={clsx(
        "w-[101px] h-[66px] flex border",
        active ? "border-[#f3e6cd] bg-[#d6b78a]" : "border-[#d3b078] bg-[#c49a58]"
      )}
    >
      <span className="flex-1 h-full flex items-center justify-center">{children}</span>
      {stacked && <span className={clsx("w-[5px] h-full border-l-2", active ? "border-[#a78150]" : "border-[#a47a3a]")} />}
    </button>
  );
}

function Taskbar() {
  return (
    <div className="relative h-[78px] bg-[#b8842a]">
      <svg viewBox="0 0 2768 78" preserveAspectRatio="none" className="absolute inset-0 w-full h-full">
        <defs>
          <linearGradient id="desk" x1="0" y1="0" x2="1" y2="0">
            <stop offset="0" stopColor="#b98a30" />
            <stop offset=".75" stopColor="#b97f2a" />
            <stop offset="1" stopColor="#ad6b28" />
          </linearGradient>
          <linearGradient id="sand" x1="0" y1="0" x2="0" y2="1">
            <stop offset="0" stopColor="#c5ab7a" />
            <stop offset="1" stopColor="#b8a070" />
          </linearGradient>
        </defs>
        <path d="M0 0h1370v78H0z" fill="url(#desk)" />
        <path d="M0 0h150l-22 78H0z" fill="#bd9048" />
        <path d="M1366 0h165l14 78h-190z" fill="#9f7f3f" />
        <path d="M1525 0h890l150 78H1540z" fill="url(#sand)" />
        <path d="M2395 0h373v78h-205q-70-46-168-78z" fill="#c29d3a" />
        <path d="M2395 0h30q90 36 190 78h-52q-70-46-168-78z" fill="#bd9025" />
      </svg>
      <div className="relative h-full flex items-start pt-[2px] pl-[19px]">
        <div className="flex items-center h-[74px] gap-[13px]">
          <button aria-label="开始">
            <svg viewBox="0 0 48 48" className="w-12 h-12" fill="#fff">
              <path d="M0 6l20-3v20H0zM23 2l25-2v23H23zM0 25h20v20L0 42zM23 25h25v23l-25-3z" />
            </svg>
          </button>
          <button aria-label="显示桌面" className="ml-2">
            <svg viewBox="0 0 56 44" className="w-14 h-11 mt-3">
              <rect x="1" y="1" width="54" height="42" fill="#c7d2df" stroke="#7d8996" />
              <rect x="4" y="4" width="48" height="33" fill="#2f6fdc" />
              <path d="M4 4h48L14 37H4z" fill="#6aa2f5" opacity=".6" />
              <path d="M4 38h48v4H4z" fill="#37496b" />
            </svg>
          </button>
          <button aria-label="Chrome">
            <svg viewBox="0 0 54 54" className="w-[54px] h-[54px]">
              <circle cx="27" cy="27" r="26" fill="#f9cd4b" />
              <path d="M27 27L4 15Q12 1 27 1q16 0 23 14z" fill="#dc4437" />
              <path d="M27 27L4 15Q-4 33 8 45q8 8 18 8l10-18z" fill="#1e9a57" />
              <circle cx="27" cy="27" r="12" fill="#fff" />
              <circle cx="27" cy="27" r="9.500" fill="#4688f1" />
            </svg>
          </button>
          <button aria-label="Internet Explorer"><IELogo /></button>
          <button aria-label="360 浏览器">
            <svg viewBox="0 0 54 56" className="w-[54px] h-14">
              <circle cx="27" cy="29" r="24" fill="#4cb52c" stroke="#fff" strokeWidth="4" />
              <path d="M43 32H18q1 9 10 9 5 0 8-4h7q-4 11-16 11Q11 46 11 30q1-15 17-16 15 1 15 18zM18 26h17q-1-6-8-6t-9 6z" fill="#fff" />
              <path d="M8 55q-8-10 4-25Q27 6 51 2q-5 4-6 9Q22 14 13 34 6 46 8 55z" fill="#6acb3f" opacity=".8" />
            </svg>
          </button>
          <button aria-label="文档" className="ml-[6px]">
            <svg viewBox="0 0 40 50" className="w-10 h-[50px] mt-1">
              <path d="M0 0h28l12 12v38H0z" fill="#f4f6f9" stroke="#a9aeb6" />
              <path d="M28 0v12h12z" fill="#b8c1cc" />
              <path d="M4 10h20M4 17h32M4 24h32M4 31h32M4 38h32M4 45h32" stroke="#cdd6e2" />
            </svg>
          </button>
          <button aria-label="远程桌面" className="ml-2">
            <svg viewBox="0 0 54 50" className="w-[54px] h-[50px]">
              <path d="M1 12l16-6v28L1 37z" fill="#d5dbe1" stroke="#79828c" />
              <path d="M15 2l38 5-5 29-33-5z" fill="#e3e7ec" stroke="#8c949e" />
              <path d="M18 5l31 5-4 22-27-5z" fill="#1424b4" />
              <path d="M31 7l18 3-4 22z" fill="#5b86ef" />
              <ellipse cx="37" cy="43" rx="15" ry="6" fill="#dfe3e7" />
              <path d="M33 33h8v9h-8z" fill="#c3c9d0" />
            </svg>
          </button>
          <button aria-label="照片">
            <svg viewBox="0 0 58 56" className="w-[58px] h-14">
              <path d="M1 3l54-1 2 42-53 11z" fill="#2d3f50" />
              <path d="M2 3h50v40L4 52z" fill="#d5edf7" />
              <path d="M5 6h44v34L7 48z" fill="#3ca3cf" />
              <circle cx="31" cy="16" r="9" fill="#f5de4b" />
              <path d="M13 21h7l3-5h10l3 5h9v15l-32 2z" fill="#b3bac0" stroke="#4a5157" />
              <circle cx="29" cy="29" r="6" fill="#2c3238" stroke="#e5e9ec" strokeWidth="3" />
            </svg>
          </button>
        </div>
        <span className="ml-[30px] text-[28px] leading-[26px] font-bold text-white">»</span>
        <div className="absolute left-[615px] flex gap-[4px]">
          <TaskButton label="文件资源管理器">
            <svg viewBox="0 0 56 56" className="w-14 h-14">
              <path d="M4 2h18l3 6h17v5h10v40H4z" fill="#dfbe52" />
              <path d="M8 4h12v7H8zM22 8h12v7H22zM36 12h12v7H36z" fill="#fff" />
              <path d="M9 5h3v5H9z" fill="#3c8a4b" />
              <path d="M23 9h3v5h-3z" fill="#d2433c" />
              <path d="M37 13h3v5h-3z" fill="#3a76c4" />
              <path d="M2 13h16l4 5h31v34H2z" fill="#f4df86" />
              <path d="M7 55V38q0-4 4-4h34q4 0 4 4v17H39V45H18v10z" fill="#6fc0e4" stroke="#4a9cc6" />
              <path d="M10 37h36v5H10z" fill="#b5e2f5" />
            </svg>
          </TaskButton>
          <TaskButton label="记事本" stacked>
            <svg viewBox="0 0 52 54" className="w-[52px] h-[54px]">
              <path d="M40 6h10l1 40-8 7-8-3z" fill="#e5e8e6" stroke="#8e9c98" />
              <path d="M19 3l29 4-10 43L1 41z" fill="#63b3b8" />
              <path d="M19 3l15 2L10 43l-9-2z" fill="#b9e4e0" opacity=".8" />
              <path d="M19 3l29 4" stroke="#4f5d60" strokeWidth="4" strokeDasharray="2 2" />
            </svg>
          </TaskButton>
          <TaskButton label="Visual Studio">
            <svg viewBox="0 0 60 58" className="w-[60px] h-[58px]">
              <path d="M1 14l7-3 38 34V57L8 21v18l-7 5z" fill="#7a3fbd" />
              <path d="M1 14l7-3v36l-7-3z" fill="#5b2a98" />
              <path d="M8 47l38-35V1L8 37z" fill="#8f4fd1" />
              <path d="M45 0l14 7v44l-14 7z" fill="#b17ef0" />
            </svg>
          </TaskButton>
          <TaskButton label="Word" active stacked>
            <svg viewBox="0 0 56 56" className="w-14 h-14">
              <path d="M12 1h36v12L12 44H1V13Q2 3 12 1z" fill="#9db8e4" stroke="#5474b4" />
              <path d="M1 13Q2 3 12 1q-4 20-1 43H1z" fill="#2b4fa3" />
              <path d="M16 8l38 4-2 42-38-5z" fill="#fdfdff" stroke="#a8b4cc" />
              <path d="M20 15l4 16 6-12 3 13 6-16" fill="none" stroke="#1c3b91" strokeWidth="3.500" />
              <path d="M41 19h8M41 25h8M40 31h8M19 36l29 4M18 42l29 4" stroke="#1c3b91" strokeWidth="3" />
            </svg>
          </TaskButton>
          <TaskButton label="Internet Explorer 窗口" stacked><IELogo /></TaskButton>
        </div>
        <div className="ml-auto h-[74px] flex items-center">
          <button aria-label="显示隐藏的图标" className="w-[28px] flex justify-center">
            <Arrow className="w-[14px] h-2 rotate-180 fill-white" />
          </button>
          <button aria-label="音量" className="ml-[18px] w-[34px]">
            <svg viewBox="0 0 26 30" className="w-[26px] h-[30px] mx-auto" stroke="#6b5a2c" strokeWidth="1">
              <path d="M1 9h5l9-9v30l-9-9H1z" fill="#fff" />
              <path d="M19 10q5 5 0 10" fill="none" stroke="#fff" strokeWidth="2" />
            </svg>
          </button>
          <button aria-label="操作中心" className="ml-[9px] w-[34px]">
            <svg viewBox="0 0 30 32" className="w-[30px] h-8 mx-auto">
              <path d="M3 1v30" stroke="#fff" strokeWidth="3" />
              <path d="M5 2h10v4h12v12H13v-3H5z" fill="#fff" stroke="#6b5a2c" strokeWidth=".8" />
              <circle cx="21" cy="22" r="8.500" fill="#d8293a" />
              <path d="M17 18l8 8M25 18l-8 8" stroke="#fff" strokeWidth="2.500" />
            </svg>
          </button>
          <button aria-label="网络" className="ml-[9px] w-[34px]">
            <svg viewBox="0 0 30 32" className="w-[30px] h-8 mx-auto" fill="none" stroke="#f4efe0" strokeWidth="2">
              <circle cx="5" cy="4" r="3" />
              <path d="M5 7v21h8M9 4h18v7M9 14h8v5" />
              <circle cx="21" cy="22" r="8.500" fill="#d8293a" stroke="none" />
              <path d="M17 18l8 8M25 18l-8 8" stroke="#fff" strokeWidth="2.500" />
            </svg>
          </button>
          <button className="ml-[14px] w-[34px] text-[25px] text-white">中</button>
          <button aria-label="搜狗输入法" className="ml-[20px] w-[28px]">
            <SogouLogo className="w-7 h-7" />
          </button>
          <time className="w-[163px] pl-1 text-center text-[22px] leading-[35px] text-[#fdf9ec]">
            19:06
            <br />
            2022/3/25
          </time>
        </div>
      </div>
    </div>
  );
}

export default function App() {
  return (
    <div className="relative h-screen flex flex-col overflow-hidden pt-[3px] pb-[3px] pl-[3px] pr-[4px] bg-[#dcebf5] font-['Noto_Sans','Noto_Sans_CJK_SC',sans-serif]">
      <OfficeButton />
      <TitleBar />
      <TabRow />
      <div className="flex gap-[5px] h-[174px] pt-1 pb-1 pl-[5px] border-b-2 border-[#9dbbd8] bg-linear-to-b from-[#dbe6f4] via-[#c9d9ed] via-30% to-[#e0f3fd]">
        <ClipboardGroup />
        <FontGroup />
        <ParagraphGroup />
        <StylesGroup />
        <EditGroup />
      </div>
      <div className="flex-1 min-h-0 flex">
        <Document />
        <ScrollBar />
      </div>
      <StatusBar />
      <Taskbar />
    </div>
  );
}
